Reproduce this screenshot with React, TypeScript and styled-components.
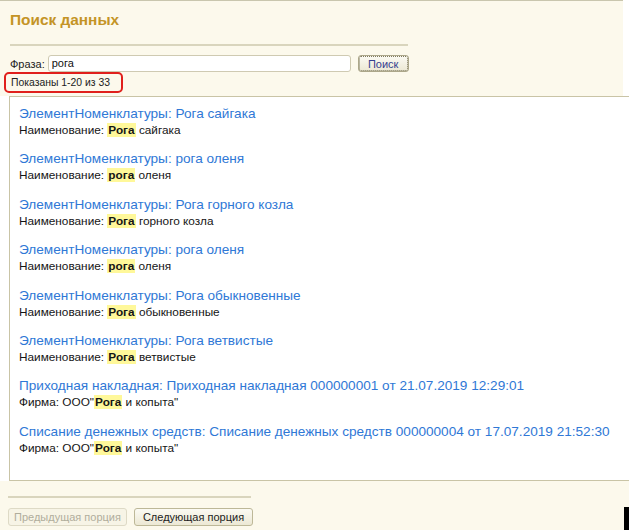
import React from "react";
import styled, { createGlobalStyle } from "styled-components";

const GlobalStyle = createGlobalStyle`
  html, body {
    margin: 0;
    padding: 0;
    background: #ffffff;
  }
  body {
    font-family: "Liberation Sans", Arial, sans-serif;
  }
`;

const Page = styled.div`
  width: 629px;
  height: 530px;
  display: flex;
  flex-direction: column;
  background: #ffffff;
  position: relative;
  overflow: hidden;
`;

const Header = styled.div`
  width: 623px;
  height: 96px;
  flex-shrink: 0;
  box-sizing: border-box;
  background: #fcf9ec;
  border-top: 1px solid #c9c6ae;
  padding: 9px 0 0 10px;
  display: flex;
  flex-direction: column;
`;

const Title = styled.h1`
  margin: 0 0 14px;
  font-family: "Liberation Sans", Arial, sans-serif;
  font-size: 15.4px;
  font-weight: bold;
  line-height: 20px;
  color: #c49426;
`;

const Divider = styled.div<{ $width: number }>`
  width: ${(p) => p.$width}px;
  height: 2px;
  background: #d9d5bd;
`;

const SearchRow = styled.div`
  display: flex;
  align-items: center;
  margin-top: 9px;
  height: 17px;
`;

const Label = styled.span`
  font-size: 11px;
  color: #222;
  margin-right: 3px;
`;

const Input = styled.div`
  width: 303px;
  height: 17px;
  box-sizing: border-box;
  background: #fff;
  border: 1px solid #cfcab2;
  border-radius: 3px;
  font-size: 11px;
  line-height: 15px;
  padding-left: 3px;
  color: #111;
`;

const Button = styled.div<{ $disabled?: boolean; $focused?: boolean }>`
  height: 18px;
  box-sizing: border-box;
  display: flex;
  align-items: center;
  justify-content: center;
  font-size: 11px;
  border-radius: 3px;
  border: 1px solid ${(p) => (p.$disabled ? "#dedac6" : p.$focused ? "#aca78a" : "#bdb898")};
  background: ${(p) =>
    p.$disabled ? "#f7f4e6" : "linear-gradient(#fbfaf3, #ece8d4)"};
  color: ${(p) => (p.$disabled ? "#b0ad9c" : p.$focused ? "#34408e" : "#1c1c1c")};
  outline: ${(p) => (p.$focused ? "1px dotted #7f7a5e" : "none")};
  outline-offset: -2px;
`;

const SearchButton = styled(Button)`
  width: 51px;
  height: 17px;
  margin-left: 7px;
`;

const Count = styled.div`
  align-self: flex-start;
  margin: 0 0 0 -6px;
  padding: 2px 8px 2px 5px;
  border: 2px solid #e0201c;
  border-radius: 5px;
  font-size: 10.4px;
  line-height: 13px;
  color: #222;
  width: 102px;
  white-space: nowrap;
`;

const Results = styled.div`
  margin-left: 9px;
  height: 385px;
  flex-shrink: 0;
  box-sizing: border-box;
  border: 1px solid #c9c4a6;
  border-right: none;
  background: #fff;
  padding: 8px 0 0 9px;
  display: flex;
  flex-direction: column;
  gap: 12.4px;
`;

const Item = styled.div`
  display: flex;
  flex-direction: column;
`;

const Link = styled.a`
  font-size: 13.6px;
  line-height: 18px;
  color: #2f78d6;
  text-decoration: none;
  white-space: nowrap;
`;

const Desc = styled.div`
  font-size: 11.8px;
  line-height: 15px;
  color: #151515;
  white-space: nowrap;
`;

const Mark = styled.span`
  background: #fff89a;
  font-weight: bold;
  padding: 0 1px;
`;

const Footer = styled.div`
  flex: 1;
  background: #fcf9ec;
  padding: 15px 0 0 8px;
  display: flex;
  flex-direction: column;
`;

const FooterButtons = styled.div`
  display: flex;
  gap: 7px;
  margin-top: 10px;
`;

const PagerButton = styled(Button)`
  width: 119px;
`;

const Cursor = styled.div`
  position: absolute;
  right: 0;
  bottom: 0;
  width: 5px;
  height: 23px;
  background: #000;
`;

type Row = { title: string; label: string; word: string; after: string };

const rows: Row[] = [
  { title: "ЭлементНоменклатуры: Рога сайгака", label: "Наименование: ", word: "Рога", after: " сайгака" },
  { title: "ЭлементНоменклатуры: рога оленя", label: "Наименование: ", word: "рога", after: " оленя" },
  { title: "ЭлементНоменклатуры: Рога горного козла", label: "Наименование: ", word: "Рога", after: " горного козла" },
  { title: "ЭлементНоменклатуры: рога оленя", label: "Наименование: ", word: "рога", after: " оленя" },
  { title: "ЭлементНоменклатуры: Рога обыкновенные", label: "Наименование: ", word: "Рога", after: " обыкновенные" },
  { title: "ЭлементНоменклатуры: Рога ветвистые", label: "Наименование: ", word: "Рога", after: " ветвистые" },
  {
    title: "Приходная накладная: Приходная накладная 000000001 от 21.07.2019 12:29:01",
    label: "Фирма: ООО\"",
    word: "Рога",
    after: " и копыта\"",
  },
  {
    title: "Списание денежных средств: Списание денежных средств 000000004 от 17.07.2019 21:52:30",
    label: "Фирма: ООО\"",
    word: "Рога",
    after: " и копыта\"",
  },
];

export default function App() {
  return (
    <>
      <GlobalStyle />
      <Page>
        <Header>
          <Title>Поиск данных</Title>
          <Divider $width={398} />
          <SearchRow>
            <Label>Фраза:</Label>
            <Input>рога</Input>
            <SearchButton $focused>Поиск</SearchButton>
          </SearchRow>
          <Count>Показаны 1-20 из 33</Count>
        </Header>
        <Results>
          {rows.map((r, i) => (
            <Item key={i}>
              <Link href="#">{r.title}</Link>
              <Desc>
                {r.label}
                <Mark>{r.word}</Mark>
                {r.after}
              </Desc>
            </Item>
          ))}
        </Results>
        <Footer>
          <Divider $width={243} />
          <FooterButtons>
            <PagerButton $disabled>Предыдущая порция</PagerButton>
            <PagerButton>Следующая порция</PagerButton>
          </FooterButtons>
        </Footer>
        <Cursor />
      </Page>
    </>
  );
}
